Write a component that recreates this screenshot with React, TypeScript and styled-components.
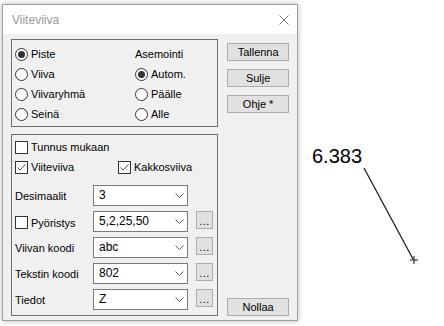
import styled, { createGlobalStyle } from 'styled-components'

const GlobalStyle = createGlobalStyle`
  html, body { margin: 0; padding: 0; background: #fff; }
  body {
    font-family: "Liberation Sans", Arial, sans-serif;
    font-size: 11px;
    color: #000;
  }
  * { box-sizing: border-box; }
`

const Screen = styled.div`
  display: flex;
  width: 444px;
  height: 326px;
  overflow: hidden;
  background: #fff;
`

const Window = styled.div`
  margin: 4px 0 0 2px;
  width: 296px;
  height: 317px;
  flex: none;
  display: flex;
  flex-direction: column;
  border: 1px solid #a0a0a0;
  box-shadow: 0 0 6px rgba(0, 0, 0, 0.28);
  background: #f0f0f0;
`

const TitleBar = styled.div`
  height: 29px;
  flex: none;
  display: flex;
  align-items: center;
  justify-content: space-between;
  padding: 0 8px 0 9px;
  background: #fff;
  color: #999;
  font-size: 12px;
`

const Body = styled.div`
  flex: 1;
  display: flex;
  gap: 9px;
  padding: 5px 8px 5px 8px;
`

const LeftCol = styled.div`
  width: 208px;
  display: flex;
  flex-direction: column;
  gap: 7px;
`

const RightCol = styled.div`
  width: 62px;
  display: flex;
  flex-direction: column;
  gap: 8px;
  padding-top: 4px;
`

const Group = styled.div<{ $h: number }>`
  height: ${p => p.$h}px;
  border: 1px solid #6e6e6e;
`

const RadioGrid = styled.div`
  display: grid;
  grid-template-columns: 120px 1fr;
  grid-auto-rows: 20px;
  grid-auto-flow: column;
  grid-template-rows: repeat(4, 20px);
  padding: 4px 3px 0 3px;
`

const Item = styled.label`
  display: flex;
  align-items: center;
  gap: 3px;
  white-space: nowrap;
`

const Caption = styled.div`
  display: flex;
  align-items: center;
`

const RadioDot = styled.span<{ $on?: boolean }>`
  width: 13px;
  height: 13px;
  border-radius: 50%;
  border: 1px solid #333;
  background: #fff;
  display: flex;
  align-items: center;
  justify-content: center;
  flex: none;
  &::after {
    content: '';
    width: 7px;
    height: 7px;
    border-radius: 50%;
    background: ${p => (p.$on ? '#333' : 'transparent')};
  }
`

const Box = styled.span`
  width: 13px;
  height: 13px;
  border: 1px solid #333;
  background: #fff;
  flex: none;
  display: flex;
  align-items: center;
  justify-content: center;
`

const Group2Inner = styled.div`
  display: flex;
  flex-direction: column;
  padding: 2px 3px 4px 3px;
`

const CheckRow = styled.div`
  height: 20px;
  display: grid;
  grid-template-columns: 103px 1fr;
  align-items: center;
`

const Fields = styled.div`
  display: flex;
  flex-direction: column;
  gap: 5px;
  margin-top: 8px;
`

const FieldRow = styled.div`
  display: flex;
  align-items: flex-start;
  height: 21px;
`

const FieldLabel = styled.div`
  width: 78px;
  flex: none;
  display: flex;
  align-items: center;
  gap: 3px;
  padding-top: 5px;
  white-space: nowrap;
`

const Select = styled.div`
  width: 95px;
  height: 21px;
  flex: none;
  border: 1px solid #7a7a7a;
  background: #fff;
  display: flex;
  align-items: center;
  justify-content: space-between;
  padding: 0 3px 2px 5px;
  font-size: 12px;
`

const Chevron = styled.svg`
  width: 9px;
  height: 6px;
  margin-top: 3px;
`

const MoreButton = styled.div`
  width: 17px;
  height: 18px;
  margin-left: 8px;
  border: 1px solid #adadad;
  background: #e1e1e1;
  display: flex;
  align-items: center;
  justify-content: center;
  font-size: 11px;
  letter-spacing: 0.5px;
  padding-top: 2px;
`

const Button = styled.div<{ $bottom?: boolean }>`
  height: 18px;
  border: 1px solid #adadad;
  background: #e1e1e1;
  display: flex;
  align-items: center;
  justify-content: center;
  font-size: 11px;
  margin-top: ${p => (p.$bottom ? 'auto' : '0')};
`

const Canvas = styled.div`
  flex: 1;
  height: 326px;
`

function Radio(props: { on?: boolean; text: string }) {
  return (
    <Item>
      <RadioDot $on={props.on} />
      {props.text}
    </Item>
  )
}

function Check(props: { on?: boolean }) {
  return (
    <Box>
      {props.on && (
        <svg width="11" height="11" viewBox="0 0 11 11">
          <polyline points="1.5,5.5 4,8 9.5,2.5" fill="none" stroke="#555" strokeWidth="1" />
        </svg>
      )}
    </Box>
  )
}

function Combo(props: { value: string }) {
  return (
    <Select>
      <span>{props.value}</span>
      <Chevron viewBox="0 0 9 6">
        <polyline points="0.5,0.5 4.5,4.5 8.5,0.5" fill="none" stroke="#606060" strokeWidth="1" />
      </Chevron>
    </Select>
  )
}

export default function App() {
  return (
    <>
      <GlobalStyle />
      <Screen>
        <Window>
          <TitleBar>
            <span>Viiteviiva</span>
            <svg width="10" height="10" viewBox="0 0 10 10">
              <path d="M0.5 0.5 L9.5 9.5 M9.5 0.5 L0.5 9.5" stroke="#777" strokeWidth="1" />
            </svg>
          </TitleBar>
          <Body>
            <LeftCol>
              <Group $h={88}>
                <RadioGrid>
                  <Radio on text="Piste" />
                  <Radio text="Viiva" />
                  <Radio text="Viivaryhmä" />
                  <Radio text="Seinä" />
                  <Caption>Asemointi</Caption>
                  <Radio on text="Autom." />
                  <Radio text="Päälle" />
                  <Radio text="Alle" />
                </RadioGrid>
              </Group>
              <Group $h={182}>
                <Group2Inner>
                  <CheckRow>
                    <Item>
                      <Check />
                      Tunnus mukaan
                    </Item>
                  </CheckRow>
                  <CheckRow>
                    <Item>
                      <Check on />
                      Viiteviiva
                    </Item>
                    <Item>
                      <Check on />
                      Kakkosviiva
                    </Item>
                  </CheckRow>
                  <Fields>
                    <FieldRow>
                      <FieldLabel>Desimaalit</FieldLabel>
                      <Combo value="3" />
                    </FieldRow>
                    <FieldRow>
                      <FieldLabel>
                        <Check />
                        Pyöristys
                      </FieldLabel>
                      <Combo value="5,2,25,50" />
                      <MoreButton>...</MoreButton>
                    </FieldRow>
                    <FieldRow>
                      <FieldLabel>Viivan koodi</FieldLabel>
                      <Combo value="abc" />
                      <MoreButton>...</MoreButton>
                    </FieldRow>
                    <FieldRow>
                      <FieldLabel>Tekstin koodi</FieldLabel>
                      <Combo value="802" />
                      <MoreButton>...</MoreButton>
                    </FieldRow>
                    <FieldRow>
                      <FieldLabel>Tiedot</FieldLabel>
                      <Combo value="Z" />
                      <MoreButton>...</MoreButton>
                    </FieldRow>
                  </Fields>
                </Group2Inner>
              </Group>
            </LeftCol>
            <RightCol>
              <Button>Tallenna</Button>
              <Button>Sulje</Button>
              <Button>Ohje *</Button>
              <Button $bottom>Nollaa</Button>
            </RightCol>
          </Body>
        </Window>
        <Canvas>
          <svg width="146" height="326" viewBox="0 0 146 326">
            <text x="14" y="163" fontFamily="Liberation Sans, Arial, sans-serif" fontSize="20" fill="#000">
              6.383
            </text>
            <line x1="66" y1="168" x2="115" y2="259" stroke="#111" strokeWidth="1.2" />
            <path d="M112 260 L120 260 M116 256 L116 264" stroke="#111" strokeWidth="1" />
          </svg>
        </Canvas>
      </Screen>
    </>
  )
}
